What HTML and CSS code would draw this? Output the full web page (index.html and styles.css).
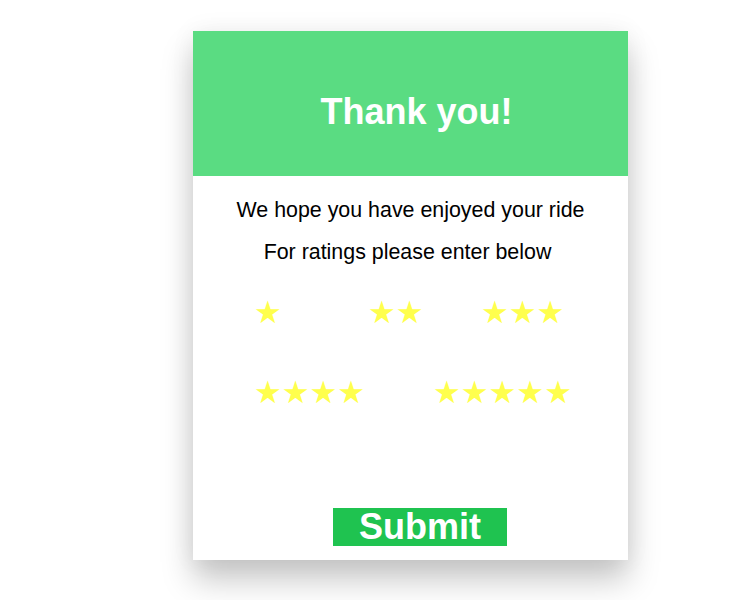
FILE: index.html
```html
<!DOCTYPE html>
<html lang="en">
<head>
    <meta charset="UTF-8">
    <meta name="viewport" content="width=device-width, initial-scale=1.0">
    <title>Rate your ride</title>
    <link rel="stylesheet" href="styles.css">
</head>
<body>
    <div class="card">
        <div class="card-header">
            <h1 class="card-title">Thank you!</h1>
        </div>
        <div class="card-body">
            <p class="card-text">We hope you have enjoyed your ride</p>
            <p class="card-text shift-left">For ratings please enter below</p>

            <div class="rating-row row-top">
                <span class="stars">★</span>
                <span class="stars">★★</span>
                <span class="stars">★★★</span>
            </div>
            <div class="rating-row row-bottom">
                <span class="stars">★★★★</span>
                <span class="stars">★★★★★</span>
            </div>

            <div class="submit-container">
                <button class="submit-btn">Submit</button>
            </div>
        </div>
    </div>
</body>
</html>
```

FILE: styles.css
```css
html, body {
    min-height: 600px;
}

body {
    font-family: 'Liberation Sans', Arial, sans-serif;
    background: #ffffff;
    margin: 0;
    padding: 31px 0 40px 0;
    box-sizing: border-box;
}

.card {
    width: 435px;
    margin-left: 193px;
    background: white;
    box-shadow: 0 20px 30px rgba(0, 0, 0, 0.22), 0 0 24px rgba(0, 0, 0, 0.06);
}

.card-header {
    background: #5adc82;
    height: 145px;
    display: flex;
    align-items: center;
    justify-content: center;
}

.card-title {
    margin: 0;
    color: white;
    font-size: 36px;
    font-weight: bold;
    padding: 16px 0 0 12px;
}

.card-body {
    padding: 13px 0 14px 0;
}

.card-text {
    margin: 0;
    text-align: center;
    font-size: 21.4px;
    line-height: 42px;
    color: black;
}

.shift-left {
    padding-right: 6px;
}

.rating-row {
    display: grid;
    padding-left: 61px;
    height: 40px;
    align-items: center;
}

.row-top {
    grid-template-columns: 114px 113px auto;
    margin-top: 19px;
}

.row-bottom {
    grid-template-columns: 179px auto;
    margin-top: 40px;
}

.stars {
    font-family: 'DejaVu Sans', sans-serif;
    font-size: 31px;
    line-height: 40px;
    color: #ffff4d;
}

.submit-container {
    text-align: center;
    margin-top: 96px;
}

.submit-btn {
    background: #1fc350;
    color: white;
    border: none;
    font-family: 'Liberation Sans', Arial, sans-serif;
    font-size: 36px;
    font-weight: bold;
    line-height: 38px;
    height: 38px;
    padding: 0 26px;
    margin-left: 19px;
}
```
